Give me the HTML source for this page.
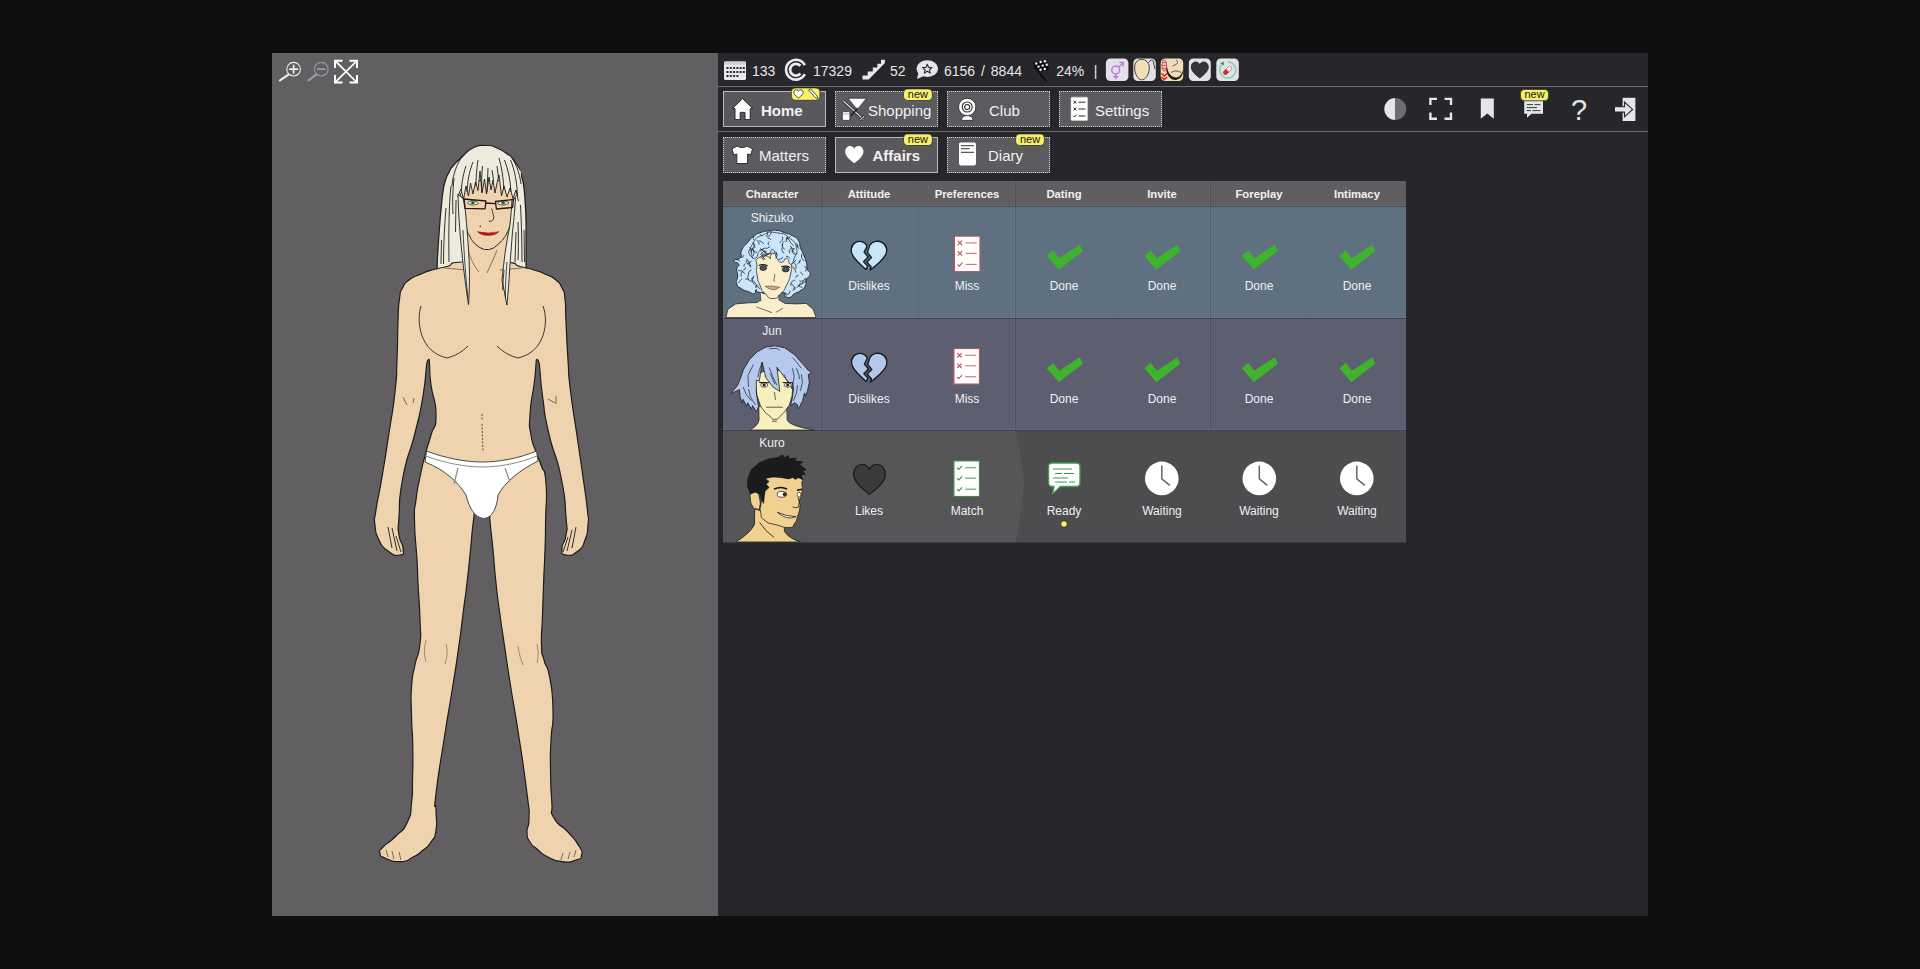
<!DOCTYPE html>
<html lang="en">
<head>
<meta charset="utf-8">
<title>Affairs</title>
<style>
*{box-sizing:border-box;margin:0;padding:0}
html,body{width:1920px;height:969px;overflow:hidden;background:#0f0f10}
body{position:relative;font-family:"Liberation Sans",sans-serif;color:#e9e9ec}
.abs{position:absolute}
#left{left:272px;top:53px;width:446px;height:863px;background:#625f63}
#right{left:718px;top:53px;width:930px;height:863px;background:#27262a}
.hl{left:718px;width:930px;height:1px;background:#6b6b70}
.stat{top:61.700px;height:18px;line-height:18px;font-size:14px;color:#e6e6ea;white-space:nowrap}
.btn{height:36px;width:103px;background:#5c5b5f;border:1px dotted #d4d4d8;color:#f1f1f3}
.btn.sel{border:1px solid #b9b9bd;background:#59585c}
.btn .lb{position:absolute;top:1.5px;height:34px;line-height:34px;font-size:15px;white-space:nowrap}
.btn.sel .lb{font-weight:bold}
.badge{position:absolute;background:#f6f06a;color:#1a1a10;border-radius:4px;font-size:10.5px;line-height:11px;height:12px;padding:0 4px;text-align:center}
#tbl{left:723px;top:181px;width:683px;height:362px;background:#505053}
.th{position:absolute;top:0.500px;height:25px;line-height:25px;font-size:11.300px;font-weight:bold;color:#f3f1ec;text-align:center;width:98px}
.row{position:absolute;left:0;width:683px}
.nm{position:absolute;left:0;width:98px;text-align:center;font-size:12px;color:#eeeef0;line-height:14px}
.cl{position:absolute;width:98px;text-align:center;font-size:12px;color:#f0f0f2;line-height:14px}
.vs{position:absolute;top:0;width:1px}
.bt{width:28.8px;height:12px;line-height:11px;font-size:11px;color:#16160e;text-align:center;z-index:5}
</style>
</head>
<body>
<div id="left" class="abs"></div>
<div id="right" class="abs"></div>
<!--FIG--><svg class="abs" style="left:272px;top:53px" width="446" height="863" viewBox="272 53 446 863">
<path d="M485.0,145.5C476.3,145.5 480.0,144.3 472.0,148.5C464.0,152.7 467.3,152.2 461.0,158.0C454.7,163.8 457.1,161.0 453.0,166.0C448.9,171.0 451.3,167.7 448.6,173.0C445.9,178.3 446.9,175.7 445.0,182.0C443.1,188.3 444.2,184.3 443.0,192.0C441.8,199.7 442.5,195.3 441.5,205.0C440.5,214.7 440.8,211.0 440.0,221.0C439.2,231.0 439.7,225.5 439.0,235.0C438.3,244.5 438.5,241.8 438.0,249.5C437.5,257.2 437.8,252.3 437.5,258.0C437.2,263.7 437.3,261.4 437.2,266.7C437.1,272.0 432.9,270.9 437.2,274.0C441.5,277.1 439.1,275.3 450.0,276.0C460.9,276.7 453.3,276.0 470.0,276.0C486.7,276.0 483.3,276.0 500.0,276.0C516.7,276.0 511.3,276.7 520.0,276.0C528.7,275.3 524.0,277.7 526.0,274.0C528.0,270.3 526.0,273.0 526.0,264.8C526.0,256.6 526.0,259.4 526.0,249.5C526.0,239.6 526.0,244.5 526.0,235.0C526.0,225.5 526.2,231.0 526.0,221.0C525.8,211.0 526.0,215.8 525.3,205.0C524.6,194.2 525.1,197.5 524.0,188.5C522.9,179.5 523.6,184.4 522.0,178.0C520.4,171.6 521.6,174.7 519.3,169.4C517.0,164.1 518.2,166.5 515.0,162.0C511.8,157.5 515.4,160.5 509.7,156.0C504.0,151.5 506.2,152.0 498.0,148.5C489.8,145.0 493.7,145.5 485.0,145.5Z" fill="#ecebdc" stroke="#1c1c1c" stroke-width="1.2"/>
<path d="M462.0,262.0C443.0,263.5 457.0,263.8 447.0,266.5C437.0,269.2 441.0,267.3 432.0,270.0C423.0,272.7 427.7,271.2 420.0,274.5C412.3,277.8 414.8,275.5 409.0,280.0C403.2,284.5 405.7,281.7 402.5,288.0C399.3,294.3 401.0,287.7 399.5,299.0C398.0,310.3 398.8,301.7 398.0,322.0C397.2,342.3 398.0,336.7 397.0,360.0C396.0,383.3 397.7,367.7 395.0,392.0C392.3,416.3 393.3,404.7 389.0,433.0C384.7,461.3 386.3,451.3 382.0,477.0C377.7,502.7 378.3,494.0 376.0,510.0C373.7,526.0 374.0,515.0 375.0,525.0C376.0,535.0 374.7,531.3 379.0,540.0C383.3,548.7 381.0,546.0 388.0,551.0C395.0,556.0 395.0,556.0 400.0,555.0C405.0,554.0 403.3,554.7 403.0,548.0C402.7,541.3 400.3,545.3 399.0,535.0C397.7,524.7 397.7,536.3 399.0,517.0C400.3,497.7 397.7,505.0 403.0,477.0C408.3,449.0 408.3,460.0 415.0,433.0C421.7,406.0 418.7,420.3 423.0,396.0C427.3,371.7 425.3,363.7 428.0,360.0C430.7,356.3 428.3,366.7 431.0,385.0C433.7,403.3 436.0,398.3 436.0,415.0C436.0,431.7 434.3,422.7 431.0,435.0C427.7,447.3 429.7,438.0 426.0,452.0C422.3,466.0 423.3,461.0 420.0,477.0C416.7,493.0 417.8,485.3 416.0,500.0C414.2,514.7 414.2,501.0 414.5,521.0C414.8,541.0 415.8,539.3 417.0,560.0C418.2,580.7 417.0,563.0 418.0,583.0C419.0,603.0 419.4,599.3 420.0,620.0C420.6,640.7 421.5,630.0 419.8,645.0C418.1,660.0 417.7,651.3 415.0,665.0C412.3,678.7 412.8,669.3 411.6,686.0C410.4,702.7 411.1,694.3 411.5,715.0C411.9,735.7 412.5,726.3 412.8,748.0C413.1,769.7 412.9,762.0 412.5,780.0C412.1,798.0 413.3,788.0 411.6,802.0C409.9,816.0 412.6,810.7 407.4,822.0C402.2,833.3 404.1,827.7 396.0,836.0C387.9,844.3 388.3,841.3 383.0,847.0C377.7,852.7 379.3,849.3 380.0,853.0C380.7,856.7 378.0,855.1 385.0,858.0C392.0,860.9 391.7,861.9 401.0,861.6C410.3,861.3 406.0,860.5 413.0,857.0C420.0,853.5 416.0,856.0 422.0,851.0C428.0,846.0 426.3,849.0 431.0,842.0C435.7,835.0 434.3,840.7 436.0,830.0C437.7,819.3 436.0,822.2 436.0,810.0C436.0,797.8 433.1,818.2 436.0,793.5C438.9,768.8 439.0,771.8 444.6,736.0C450.2,700.2 448.0,716.3 452.8,686.0C457.6,655.7 455.4,670.3 459.0,645.0C462.6,619.7 460.8,630.7 463.5,610.0C466.2,589.3 464.7,603.0 467.0,583.0C469.3,563.0 468.4,570.7 470.5,550.0C472.6,529.3 471.6,533.7 473.4,521.0C475.2,508.3 472.8,516.3 476.0,512.0C479.2,507.7 478.3,508.0 483.0,508.0C487.7,508.0 487.7,507.7 490.0,512.0C492.3,516.3 489.0,508.3 490.0,521.0C491.0,533.7 491.0,529.3 493.0,550.0C495.0,570.7 493.7,561.3 496.0,583.0C498.3,604.7 497.2,594.3 500.0,615.0C502.8,635.7 500.9,621.3 504.4,645.0C507.9,668.7 505.8,655.7 510.6,686.0C515.4,716.3 513.3,700.2 518.8,736.0C524.3,771.8 523.6,766.2 527.0,793.5C530.4,820.8 529.0,805.2 529.0,818.0C529.0,830.8 526.7,824.0 527.0,832.0C527.3,840.0 526.7,836.3 530.0,842.0C533.3,847.7 531.0,844.0 537.0,849.0C543.0,854.0 539.7,852.8 548.0,857.0C556.3,861.2 552.7,860.6 562.0,861.6C571.3,862.6 569.5,862.2 576.0,860.0C582.5,857.8 580.5,859.7 581.5,855.0C582.5,850.3 583.5,853.7 579.0,846.0C574.5,838.3 576.3,841.3 568.0,832.0C559.7,822.7 559.4,828.0 554.0,818.0C548.6,808.0 553.0,818.3 551.8,802.0C550.6,785.7 550.8,789.7 550.5,769.0C550.2,748.3 550.2,759.3 551.0,740.0C551.8,720.7 553.4,731.7 553.0,711.0C552.6,690.3 552.8,695.0 549.8,678.0C546.8,661.0 546.8,671.0 544.0,660.0C541.2,649.0 542.0,660.0 541.5,645.0C541.0,630.0 541.8,635.7 542.5,615.0C543.2,594.3 542.8,604.7 543.6,583.0C544.4,561.3 544.3,570.7 545.0,550.0C545.7,529.3 545.3,543.3 545.6,521.0C545.9,498.7 547.5,501.7 546.0,483.0C544.5,464.3 544.3,475.3 541.0,465.0C537.7,454.7 539.3,462.0 536.0,452.0C532.7,442.0 533.0,447.3 531.0,435.0C529.0,422.7 529.0,431.7 530.0,415.0C531.0,398.3 531.3,403.3 534.0,385.0C536.7,366.7 535.2,356.3 538.0,360.0C540.8,363.7 538.9,371.7 542.5,396.0C546.1,420.3 542.5,406.0 548.7,433.0C554.9,460.0 555.2,449.0 561.0,477.0C566.8,505.0 564.3,497.7 566.0,517.0C567.7,536.3 567.3,524.7 566.0,535.0C564.7,545.3 562.0,541.3 562.0,548.0C562.0,554.7 560.7,554.0 566.0,555.0C571.3,556.0 571.7,556.0 578.0,551.0C584.3,546.0 581.7,548.7 585.0,540.0C588.3,531.3 587.2,535.0 588.0,525.0C588.8,515.0 589.1,526.0 587.4,510.0C585.7,494.0 586.6,502.7 583.0,477.0C579.4,451.3 580.8,462.0 576.6,433.0C572.4,404.0 573.3,414.3 570.4,390.0C567.5,365.7 569.5,382.7 568.0,360.0C566.5,337.3 567.0,342.3 566.0,322.0C565.0,301.7 566.3,310.3 565.0,299.0C563.7,287.7 565.0,294.3 562.0,288.0C559.0,281.7 561.3,284.5 556.0,280.0C550.7,275.5 553.3,277.8 546.0,274.5C538.7,271.2 542.7,272.7 534.0,270.0C525.3,267.3 530.0,269.2 520.0,266.5C510.0,263.8 523.3,263.5 504.0,262.0C484.7,260.5 481.0,260.5 462.0,262.0Z" fill="#efd3ae" stroke="#1c1c1c" stroke-width="1.2" stroke-linejoin="round"/>
<path d="M462,264 L466,222 L511,222 L506,264Z" fill="#efd3ae"/>
<path d="M464.0,190.0C455.3,197.3 463.9,194.8 464.0,201.8C464.1,208.8 464.0,204.6 464.3,211.0C464.6,217.4 464.2,215.0 464.9,221.0C465.6,227.0 464.9,224.0 466.5,229.0C468.1,234.0 467.4,231.8 469.6,236.0C471.8,240.2 470.4,238.3 473.0,241.5C475.6,244.7 474.3,243.4 477.3,245.7C480.3,248.0 478.8,247.2 482.0,248.5C485.2,249.8 483.5,249.5 486.8,249.5C490.1,249.5 488.8,249.8 492.0,248.5C495.2,247.2 493.6,247.9 496.4,245.7C499.2,243.5 498.0,244.6 500.5,242.0C503.0,239.4 501.8,241.0 504.0,238.0C506.2,235.0 505.1,236.8 507.0,233.0C508.9,229.2 508.0,231.3 509.7,226.6C511.4,221.9 510.7,224.1 512.0,219.0C513.3,213.9 512.7,217.7 513.5,211.4C514.3,205.1 514.2,207.1 514.5,200.0C514.8,192.9 522.7,196.7 514.5,190.0C506.3,183.3 506.8,180.0 490.0,180.0C473.2,180.0 472.7,182.7 464.0,190.0Z" fill="#efd3ae" stroke="#1c1c1c" stroke-width="1"/>
<!-- briefs -->
<path d="M426.5,451 C445,458 465,462 482,462 C500,462 520,458 536.5,451 L538,461 C520,470 505,482 498,495 C497,508 492,518 484,518.5 C475,518 469,508 466,495 C458,482 445,470 425,462Z" fill="#ffffff" stroke="#4a4a4a" stroke-width="1"/>
<path d="M425.5,456 C445,463 465,467 482,467 C500,467 520,463 537,456" fill="none" stroke="#8a8a8a" stroke-width="1"/>
<path d="M458,468 L454,484 M505,468 L510,482" stroke="#8a8a8a" stroke-width="1.2" fill="none"/>
<!-- navel line -->
<path d="M482,414 L482,420 M482,424 L483,452" stroke="#5b4a3a" stroke-width="1" stroke-dasharray="2 1.5" fill="none"/>
<!-- collar / neck lines -->
<path d="M444,268 L468,270 M500,270 L522,268 M468,250 C470,258 474,266 479,272 M497,250 C494,258 490,266 487,273" stroke="#6b5a48" stroke-width="0.8" fill="none"/>
<!-- chest contour -->
<path d="M421,306 C416,322 420,352 447,358 M468,346 C462,352 455,356 447,358 M543,306 C549,322 545,352 518,358 M497,346 C503,352 510,356 518,358" stroke="#2a2420" stroke-width="0.9" fill="none"/>
<!-- knees -->
<path d="M426,640 C424,648 424,655 426,662 M446,644 C448,652 447,658 445,664 M518,646 C519,654 521,660 523,665 M537,644 C539,652 538,658 537,663" stroke="#8a7660" stroke-width="0.8" fill="none"/>
<!-- elbows -->
<path d="M403,397 L407,405 M414,398 L413,403 M548,399 L555,403 M556,396 L556,404" stroke="#5b4a3a" stroke-width="0.8" fill="none"/>
<!-- fingers -->
<path d="M388,527 L392,548 M392,528 L397,551 M396,536 L401,552 M572,548 L576,527 M567,551 L572,530 M563,552 L568,537" stroke="#1c1c1c" stroke-width="0.9" fill="none"/>
<!-- toes -->
<path d="M386,850 L388,857 M392,851 L394,859 M399,852 L401,860 M576,850 L574,857 M570,852 L568,859 M563,853 L561,860" stroke="#5b4a3a" stroke-width="0.8" fill="none"/>
<!-- hair front: fringe -->
<path d="M458,172 L457.500,197 L461,189 L463.500,199.500 L466,186 L468.500,196 L470.500,183 L473,194 L475.500,182 L478,190.500 L480,171 L482,193 L484.500,179 L486.500,194 L489,177 L491,190 L493,180 L495,193 L497,183 L499,175 L501.500,196 L504,186 L507,197 L510,188 L513,198.500 L516,190 L518.500,201 L521,172 L510,156 L485,149 L466,158Z" fill="#ecebdc"/>
<path d="M457.500,197 L461,189 L463.500,199.500 L466,186 L468.500,196 L470.500,183 L473,194 L475.500,182 L478,190.500 L480,171 L482,193 L484.500,179 L486.500,194 L489,177 L491,190 L493,180 L495,193 L497,183 L499,175 L501.500,196 L504,186 L507,197 L510,188 L513,198.500 L516,190 L518.500,201" fill="none" stroke="#1c1c1c" stroke-width="0.9" stroke-linejoin="round"/>
<path d="M478,160 C476.500,170 476,178 476,186 M482.500,166 C481.500,176 481.500,184 482,192 M473,162 C469,172 467.500,182 467,192 M466,166 C462.500,176 461.500,186 461.500,190 M488,168 L487,192 M492,170 L493.500,180 M499,158 C502,168 503.500,180 504,190 M504.500,160 C508.500,170 510.500,182 511,192 M510.500,160 C515,170 517,184 517.500,196 M497,166 L498.500,178" stroke="#1c1c1c" stroke-width="0.9" fill="none"/>
<!-- strands -->
<path d="M458,194 C458.500,222 462,262 468.500,304.500 C469.500,290 470,272 468.500,250 C467.500,232 465.500,214 464.500,200Z" fill="#ecebdc" stroke="#1c1c1c" stroke-width="0.9" stroke-linejoin="round"/>
<path d="M515.500,198 C514.500,214 513.500,224 512.600,230.500 C511.500,245 510.500,258 509.700,268.600 C509,282 508,294 506.900,305 C505.500,297 503.500,288 502,280 C503,270 504,262 505,253.400 C506.500,243 508,235 509.700,226.600 C511,216 511.500,208 512,200Z" fill="#ecebdc" stroke="#1c1c1c" stroke-width="0.9" stroke-linejoin="round"/>
<path d="M463,230 C464,255 466,280 468,298 M507,262 C506,275 505,288 505.500,298 M504,270 L502.500,290" stroke="#1c1c1c" stroke-width="0.8" fill="none"/>
<path d="M451,186 C449,205 448.500,230 449,262 M446,208 C444.500,225 443.500,245 443.500,264 M454,178 C452.500,192 452.500,205 453,214 M441.500,240 L441,264 M456,200 L455.500,232 M520.500,205 C521.500,225 522,245 522,262 M518,222 C518.500,238 518.500,250 518,260 M524,230 L524.500,262 M516,232 L515,262 M461,158 C455,168 452.500,178 452,186 M509,154 C515.500,162 519.500,172 521,184" stroke="#1c1c1c" stroke-width="0.9" fill="none"/>
<!-- glasses & eyes -->
<path d="M467.500,203 C470,200 475.500,200 478.500,203.500 C475.500,205.500 470,205.500 467.500,203Z" fill="#f7f7f2" stroke="#1a1a1a" stroke-width="0.700"/>
<circle cx="472.800" cy="202.700" r="2.300" fill="#5c9a6e"/><circle cx="472.800" cy="202.700" r="0.900" fill="#17301f"/>
<path d="M497.500,203.500 C500,200 506,200 509,203 C506,205.500 500,205.500 497.500,203.500Z" fill="#f7f7f2" stroke="#1a1a1a" stroke-width="0.700"/>
<circle cx="503.200" cy="202.700" r="2.300" fill="#5c9a6e"/><circle cx="503.200" cy="202.700" r="0.900" fill="#17301f"/>
<path d="M463.500,199 L486,201 L485,208.800 L465,208.300Z M495.400,201.500 L513.500,199.400 L512.600,207.500 L496.400,209Z M486,203 L495.400,203.600" fill="none" stroke="#2d1513" stroke-width="1.300" stroke-linejoin="round"/>
<path d="M491.600,208.500 C493,213 494,216 493.500,219 C492.500,221.500 490.500,221.500 488.700,221" stroke="#3b2a20" stroke-width="0.900" fill="none"/>
<circle cx="480.300" cy="226.300" r="0.700" fill="#3b2a20"/>
<g fill="#e9a392" opacity="0.700"><circle cx="470" cy="213" r="0.600"/><circle cx="473" cy="214.500" r="0.600"/><circle cx="476" cy="213" r="0.600"/><circle cx="479" cy="214.500" r="0.600"/><circle cx="500" cy="214" r="0.600"/><circle cx="503" cy="215.500" r="0.600"/><circle cx="506" cy="214" r="0.600"/></g>
<!-- mouth -->
<path d="M477.300,231.600 C481,232.600 484,232.200 488,233 C492,232.200 495.500,232.600 499.200,231.400 C495,236.600 482,237 477.300,231.600Z" fill="#cf120c" stroke="#5a0a08" stroke-width="0.400"/>
</svg><!--/FIG-->

<!-- status bar -->
<div class="abs stat" style="left:752px">133</div>
<div class="abs stat" style="left:813px">17329</div>
<div class="abs stat" style="left:890px">52</div>
<div class="abs stat" style="left:944px;word-spacing:2px">6156 / 8844</div>
<div class="abs stat" style="left:1056.200px">24%</div>
<div class="abs stat" style="left:1093.700px">|</div>
<div class="abs hl" style="top:86px"></div>
<div class="abs hl" style="top:131px"></div>

<!-- nav row 1 -->
<div class="abs btn sel" style="left:723px;top:91px"><span class="lb" style="left:37px">Home</span></div>
<div class="abs btn" style="left:835px;top:91px"><span class="lb" style="left:32px">Shopping</span></div>
<div class="abs btn" style="left:947px;top:91px"><span class="lb" style="left:41px">Club</span></div>
<div class="abs btn" style="left:1059px;top:91px"><span class="lb" style="left:35px">Settings</span></div>
<!-- nav row 2 -->
<div class="abs btn" style="left:723px;top:137px"><span class="lb" style="left:35px;top:0.600px">Matters</span></div>
<div class="abs btn sel" style="left:835px;top:137px"><span class="lb" style="left:36.500px;top:0.600px">Affairs</span></div>
<div class="abs btn" style="left:947px;top:137px"><span class="lb" style="left:40px;top:0.600px">Diary</span></div>

<!-- table -->
<div id="tbl" class="abs">
  <div class="abs" style="left:0;top:0;width:683px;height:25px;background:#615e62"></div>
  <div class="th" style="left:0">Character</div>
  <div class="th" style="left:97px">Attitude</div>
  <div class="th" style="left:195px">Preferences</div>
  <div class="th" style="left:292px">Dating</div>
  <div class="th" style="left:390px">Invite</div>
  <div class="th" style="left:487px">Foreplay</div>
  <div class="th" style="left:585px">Intimacy</div>

  <div class="row" style="top:25px;height:112px;background:#5f7080">
    <div class="nm" style="top:5px">Shizuko</div>
    <div class="cl" style="left:97px;top:73px">Dislikes</div>
    <div class="cl" style="left:195px;top:73px">Miss</div>
    <div class="cl" style="left:292px;top:73px">Done</div>
    <div class="cl" style="left:390px;top:73px">Done</div>
    <div class="cl" style="left:487px;top:73px">Done</div>
    <div class="cl" style="left:585px;top:73px">Done</div>
  </div>
  <div class="row" style="top:137px;height:113px;background:#5d5e6f">
    <div class="nm" style="top:6px">Jun</div>
    <div class="cl" style="left:97px;top:74px">Dislikes</div>
    <div class="cl" style="left:195px;top:74px">Miss</div>
    <div class="cl" style="left:292px;top:74px">Done</div>
    <div class="cl" style="left:390px;top:74px">Done</div>
    <div class="cl" style="left:487px;top:74px">Done</div>
    <div class="cl" style="left:585px;top:74px">Done</div>
  </div>
  <div class="row" style="top:250px;height:112px;background:#4d4c4f">
    <svg class="abs" style="left:0;top:0" width="310" height="112" viewBox="0 0 310 112"><path d="M0,0 H293 C296,18 300.500,34 300.800,50 C301,68 296,92 293,112 H0Z" fill="#565558"/></svg>
    <div class="nm" style="top:5px">Kuro</div>
    <div class="cl" style="left:97px;top:73px">Likes</div>
    <div class="cl" style="left:195px;top:73px">Match</div>
    <div class="cl" style="left:292px;top:73px">Ready</div>
    <div class="cl" style="left:390px;top:73px">Waiting</div>
    <div class="cl" style="left:487px;top:73px">Waiting</div>
    <div class="cl" style="left:585px;top:73px">Waiting</div>
  </div>
  <!--LINES-->
  <div class="abs" style="left:0;top:24px;width:683px;height:1px;background:rgba(255,255,255,.05)"></div>
  <div class="abs" style="left:0;top:25px;width:683px;height:1px;background:rgba(20,25,35,.35)"></div>
  <div class="abs" style="left:0;top:136px;width:683px;height:1px;background:rgba(255,255,255,.07)"></div>
  <div class="abs" style="left:0;top:137px;width:683px;height:1px;background:rgba(20,22,40,.40)"></div>
  <div class="abs" style="left:0;top:248px;width:683px;height:1px;background:rgba(255,255,255,.06)"></div>
  <div class="abs" style="left:0;top:249px;width:683px;height:1px;background:rgba(20,20,30,.40)"></div>
  <div class="abs" style="left:0;top:361px;width:683px;height:1px;background:rgba(0,0,0,.25)"></div>
  <div class="vs" style="left:98px;height:250px;background:rgba(20,25,40,.16)"></div>
  <div class="vs" style="left:292px;height:250px;background:rgba(20,25,40,.20)"></div>
  <div class="vs" style="left:487px;height:250px;background:rgba(20,25,40,.20)"></div>
  <div class="vs" style="left:195px;height:250px;background:rgba(20,25,40,.05)"></div>
  <div class="vs" style="left:390px;height:250px;background:rgba(20,25,40,.02)"></div>
  <div class="vs" style="left:585px;height:250px;background:rgba(20,25,40,.02)"></div>
  <div class="vs" style="left:97px;height:250px;background:rgba(255,255,255,.03)"></div>
  <div class="vs" style="left:291px;height:250px;background:rgba(255,255,255,.04)"></div>
  <div class="vs" style="left:486px;height:250px;background:rgba(255,255,255,.04)"></div>
  <!--/LINES-->
</div>
<!--IC1--><svg class="abs" style="left:0;top:0;pointer-events:none" width="1920" height="969" viewBox="0 0 1920 969">
<!-- left panel zoom controls -->
<g fill="none" stroke="#ececee" stroke-linecap="round">
  <circle cx="293.600" cy="69.200" r="6.800" stroke-width="1.100"/>
  <path d="M288.400,74.600 L280,80.400" stroke-width="2.200"/>
  <path d="M289.800,69.200 H297.400 M293.600,65.400 V73" stroke-width="1.700"/>
</g>
<g fill="none" stroke="#9a999e" stroke-linecap="round">
  <circle cx="321.300" cy="69.200" r="6.800" stroke-width="1.100"/>
  <path d="M316.100,74.600 L308.600,80.400" stroke-width="2.200"/>
  <path d="M317.600,69.200 H325" stroke-width="1.700"/>
</g>
<g fill="none" stroke="#ffffff" stroke-width="1.700" stroke-linecap="square">
  <path d="M335.500,61.200 L356.500,82 M356.500,61.200 L335.500,82"/>
  <path d="M335,67 V60.700 H341.500 M350.500,60.700 H357 V67 M357,76 V82.500 H350.500 M341.500,82.500 H335 V76" stroke-width="2"/>
</g>

<!-- status bar icons -->
<!-- calendar -->
<g>
  <rect x="724" y="61.500" width="22" height="18.500" rx="1.500" fill="#e9e9ec"/>
  <rect x="724" y="61.500" width="22" height="3.200" rx="1" fill="#d0d0d4"/>
  <g fill="#26262b">
    <rect x="726.500" y="67" width="2" height="2"/><rect x="729.800" y="67" width="2" height="2"/><rect x="733.100" y="67" width="2" height="2"/><rect x="736.400" y="67" width="2" height="2"/><rect x="739.700" y="67" width="2" height="2"/><rect x="742.800" y="67" width="2" height="2"/>
    <rect x="726.500" y="71" width="2" height="2"/><rect x="729.800" y="71" width="2" height="2"/><rect x="733.100" y="71" width="2" height="2"/><rect x="736.400" y="71" width="2" height="2"/><rect x="739.700" y="71" width="2" height="2"/><rect x="742.800" y="71" width="2" height="2"/>
    <rect x="726.500" y="75" width="2" height="2"/><rect x="729.800" y="75" width="2" height="2"/><rect x="733.100" y="75" width="2" height="2"/><rect x="736.400" y="75" width="2" height="2"/>
  </g>
</g>
<!-- coin C -->
<g fill="none" stroke="#ececee" stroke-linecap="butt">
  <path d="M804.800,65.200 A9.900,9.900 0 1 0 804.800,74.200" stroke-width="2.600"/>
  <path d="M800.400,65.750 A5.900,5.900 0 1 0 800.400,73.650" stroke-width="2.700"/>
</g>
<!-- stairs -->
<path d="M862.500,79.500 V75.500 H867.700 V71.500 H872.800 V67.500 H877.400 V63.700 H881 V59.700 H884.900 V63 L868.700,79.500Z" fill="#e9e9ec"/>
<!-- speech bubble with star -->
<g>
  <ellipse cx="927.300" cy="68.600" rx="10.800" ry="8.300" fill="#e6e6ea"/>
  <path d="M918.500,72.500 L917,79 L924.500,75.800Z" fill="#e6e6ea"/>
  <path d="M927.300,64.200 L928.600,67.400 L932,67.600 L929.400,69.800 L930.300,73.100 L927.300,71.300 L924.300,73.100 L925.200,69.800 L922.600,67.600 L926,67.400Z" fill="none" stroke="#26262b" stroke-width="1.100" stroke-linejoin="round"/>
</g>
<!-- checkered flag -->
<g>
  <path d="M1034,66 L1046,81" stroke="#0c0c0d" stroke-width="1.600"/>
  <path d="M1033,63.500 C1037,59.500 1041,63.500 1044.500,59 L1049.500,68.500 C1046,73 1042,69 1038,73Z" fill="#0d0d0e"/>
  <g fill="#f2f2f4">
    <circle cx="1036.200" cy="63.500" r="1.200"/><circle cx="1040.600" cy="62" r="1.200"/><circle cx="1044.800" cy="61.300" r="1.200"/>
    <circle cx="1038.500" cy="66.600" r="1.200"/><circle cx="1042.700" cy="65.600" r="1.200"/><circle cx="1046.700" cy="64.800" r="1.200"/>
    <circle cx="1040.500" cy="69.800" r="1.200"/><circle cx="1044.800" cy="69" r="1.200"/>
  </g>
</g>
<!-- square status icons -->
<g>
  <rect x="1105.900" y="58.500" width="22.500" height="22.500" rx="4.500" fill="#e3e1e8"/>
  <g fill="none" stroke="#bf7be0" stroke-width="1.500">
    <circle cx="1115.700" cy="70" r="3.900"/>
    <path d="M1118.500,67.200 L1123,62.700 M1119.300,62.600 H1123.200 V66.500 M1115.700,73.900 V79.300 M1113.200,76.800 H1118.200"/>
  </g>
  <rect x="1133.300" y="58.500" width="22.500" height="22.500" rx="4.500" fill="#e3e1e8"/>
  <path d="M1141,59.400 C1146,59 1149.800,63 1149.300,69 C1148.800,75 1145,80.300 1141.500,79.800 C1138,79.300 1134.600,74 1134.600,68 C1134.600,63 1137,59.800 1141,59.400Z" fill="#f3deb5" stroke="#3a3528" stroke-width="0.900"/>
  <path d="M1148.500,62.500 C1150.500,60 1152,59.600 1153,60.500 L1155,69" fill="none" stroke="#3a3528" stroke-width="0.900"/>
  <rect x="1160.700" y="58.500" width="22.500" height="22.500" rx="4.500" fill="#f0dcb8"/>
  <path d="M1167,66.500 C1168,74 1172,77.500 1176,77.500 C1180,77.500 1183,73 1183.200,67.500 L1183.200,72 C1182,78 1178,80 1175,80 C1171,80 1166.500,76 1166,68Z" fill="#1f1a16"/>
  <path d="M1171,72.500 C1174,70.500 1178,70.500 1181,72.500 M1176,60 C1178,61 1178,63.500 1176,64.500 C1174.500,65.500 1173,65 1172.500,66.500" fill="none" stroke="#3a3528" stroke-width="0.800"/>
  <ellipse cx="1164.300" cy="65.500" rx="2.300" ry="5.600" fill="#f4c6c8" stroke="#c0353d" stroke-width="0.900"/>
  <path d="M1162.300,62.500 H1166.300 M1162.300,65.500 H1166.300 M1162.300,68.500 H1166.300" stroke="#c0353d" stroke-width="0.700"/>
  <path d="M1161.500,73.500 L1164.300,76 L1167.100,73.500 M1161.500,77 L1164.300,79.500 L1167.100,77" fill="none" stroke="#e01b1b" stroke-width="1.500"/>
  <rect x="1188.800" y="58.500" width="22" height="22.500" rx="4.500" fill="#e3e1e8"/>
  <path d="M1199.800,78 C1194,73.500 1191.300,70.500 1191.300,67 C1191.300,63.800 1193.600,62 1195.800,62 C1197.600,62 1199,63 1199.800,64.600 C1200.600,63 1202,62 1203.800,62 C1206,62 1208.300,63.800 1208.300,67 C1208.300,70.500 1205.600,73.500 1199.800,78Z" fill="#353537" stroke="#1a1a1b" stroke-width="0.800"/>
  <rect x="1216.300" y="58.500" width="22.500" height="22.500" rx="4.500" fill="#e3e1e8"/>
  <path d="M1222.500,64 A8,8 0 1 0 1228,62" fill="none" stroke="#7fcfa0" stroke-width="1.300"/>
  <path d="M1220,63.200 L1223.800,61.200 L1224.200,65.600Z" fill="#2fa860"/>
  <g transform="rotate(-45 1227.500 70.500)">
    <rect x="1222.500" y="68.400" width="10" height="4.200" rx="2.100" fill="#ffffff" stroke="#b8383c" stroke-width="0.600"/>
    <path d="M1222.500,70.500 A2.100,2.100 0 0 1 1224.600,68.400 H1227.500 V72.600 H1224.600 A2.100,2.100 0 0 1 1222.500,70.500Z" fill="#c2323a"/>
  </g>
</g>
</svg>
<!--/IC1-->
<!--IC2--><svg class="abs" style="left:0;top:0;pointer-events:none" width="1920" height="969" viewBox="0 0 1920 969">
<!-- Home icon -->
<path d="M742.600,98.600 L752.800,108.600 H750.200 V119.600 H745 V112.400 H740.200 V119.600 H735 V108.600 H732.400Z" fill="#ffffff" stroke="#1d1d1f" stroke-width="0.900" stroke-linejoin="round"/>
<!-- Shopping icon -->
<g>
  <path d="M848,98.200 H866.500 L858.500,108.200 H856Z" fill="#ffffff" stroke="#1d1d1f" stroke-width="0.700"/>
  <path d="M843.500,101 L863.500,119.500" stroke="#1d1d1f" stroke-width="2.600"/>
  <path d="M843.500,101 L863.500,119.500" stroke="#d9d9dc" stroke-width="1.300"/>
  <path d="M860,120.200 L864.800,115.600" stroke="#1d1d1f" stroke-width="2.400"/>
  <path d="M860.300,119.900 L864.500,115.900" stroke="#d9d9dc" stroke-width="1.100"/>
  <path d="M857,109 L851,116" stroke="#1d1d1f" stroke-width="1.300"/>
  <rect x="842.300" y="111.600" width="7.600" height="8.800" rx="1.300" fill="#ffffff" stroke="#1d1d1f" stroke-width="0.700"/>
  <path d="M842.600,114 H849.600" stroke="#8b8b90" stroke-width="0.700"/>
</g>
<!-- Club icon (webcam) -->
<g>
  <path d="M961.500,120.400 C961.500,117 964,115.600 967.200,115.600 C970.400,115.600 973,117 973,120.400Z" fill="#ffffff" stroke="#1d1d1f" stroke-width="0.800"/>
  <circle cx="967.200" cy="107" r="8.700" fill="#ffffff" stroke="#1d1d1f" stroke-width="0.800"/>
  <circle cx="967.200" cy="107" r="5" fill="none" stroke="#2a2a2c" stroke-width="1.100"/>
  <circle cx="967.200" cy="107" r="2.500" fill="none" stroke="#2a2a2c" stroke-width="1.100"/>
</g>
<!-- Settings icon -->
<g>
  <rect x="1071" y="97.200" width="16.600" height="23.300" rx="1" fill="#ffffff" stroke="#d0d0d4" stroke-width="0.600"/>
  <g stroke="#2a2a2c" stroke-width="1" fill="none">
    <path d="M1073.500,100.800 L1076.300,103.600 M1076.300,100.800 L1073.500,103.600 M1078.500,102.200 H1085.500"/>
    <path d="M1073.500,107.600 L1076.300,110.400 M1076.300,107.600 L1073.500,110.400 M1078.500,109 H1085.500"/>
    <path d="M1073.300,115.800 L1074.500,117 L1076.600,114.600 M1078.500,116 H1085.500"/>
  </g>
</g>
<!-- Matters icon (t-shirt) -->
<path d="M737.500,146 C739.500,148 744.500,148 746.800,146 L752.600,148.800 L750.600,155 L747.600,154 V163.600 H736.800 V154 L733.800,155 L731.800,148.800Z" fill="#ffffff" stroke="#1d1d1f" stroke-width="0.900" stroke-linejoin="round"/>
<!-- Affairs icon (heart) -->
<path d="M854.300,163.200 C848,158.400 845.200,155.300 845.200,151.500 C845.200,148 847.700,146 850.100,146 C851.900,146 853.500,147 854.300,148.800 C855.100,147 856.700,146 858.500,146 C860.900,146 863.400,148 863.400,151.500 C863.400,155.300 860.600,158.400 854.300,163.200Z" fill="#ffffff"/>
<!-- Diary icon -->
<g>
  <rect x="959" y="142.400" width="17" height="23" rx="1.800" fill="#ffffff"/>
  <path d="M961,145.600 H974 M961,148.600 H969.600 M961,152.400 H974" stroke="#5a595d" stroke-width="1.100"/>
</g>

<!-- right side icons -->
<g>
  <path d="M1395.300,98 A11,11 0 0 0 1395.300,120Z" fill="#e6e6ea"/>
  <path d="M1395.300,98 A11,11 0 0 1 1395.300,120Z" fill="#6d6c71"/>
  <!-- fullscreen -->
  <path d="M1430.400,105 V98.900 H1437 M1444.500,98.900 H1451 V105 M1451,112.500 V118.800 H1444.500 M1437,118.800 H1430.400 V112.500" fill="none" stroke="#e6e6ea" stroke-width="2.400"/>
  <!-- bookmark -->
  <path d="M1480.800,98.600 H1493.800 V118.800 L1487.300,113.400 L1480.800,118.800Z" fill="#e6e6ea"/>
  <!-- chat -->
  <path d="M1524.200,100.500 H1543 V113.800 H1531.500 L1527,117.800 V113.800 H1524.200Z" fill="#e6e6ea"/>
  <path d="M1526.800,104.600 H1533 M1534.500,104.600 H1540.400 M1526.800,107.600 H1537 M1526.800,110.600 H1531 M1532.500,110.600 H1540.400" stroke="#3a3a3e" stroke-width="1"/>
  <!-- exit -->
  <rect x="1622.600" y="97.800" width="12.800" height="23.200" fill="#e6e6ea"/>
  <path d="M1614.400,106.700 H1624.500 V102 L1632.600,109.400 L1624.500,116.800 V112.100 H1614.400Z" fill="#e6e6ea" stroke="#26262b" stroke-width="1.100"/>
</g>
<!-- badges (shapes) -->
<g fill="#f6f06c" stroke="#24241a" stroke-width="0.700">
  <rect x="791.300" y="87.900" width="28.600" height="12.400" rx="4"/>
  <rect x="903.500" y="88.900" width="28.800" height="11.600" rx="4"/>
  <rect x="903.500" y="133.900" width="28.800" height="11.600" rx="4"/>
  <rect x="1015.600" y="133.900" width="28.800" height="11.600" rx="4"/>
  <rect x="1520.500" y="89.400" width="28" height="11.400" rx="4"/>
</g>
<!-- home badge content -->
<path d="M798.500,98 C795,95.300 793.900,93.900 793.900,92.200 C793.900,90.700 795,89.800 796.200,89.800 C797.200,89.800 798,90.400 798.500,91.300 C799,90.400 799.800,89.800 800.800,89.800 C802,89.800 803.100,90.700 803.100,92.200 C803.100,93.900 802,95.300 798.500,98Z" fill="#ffffff" stroke="#24241a" stroke-width="0.800"/>
<path d="M808.600,90.200 L810.400,88.900 L817.200,96 L817.600,98.400 L815.300,97.600Z" fill="#ffffff" stroke="#24241a" stroke-width="0.800" stroke-linejoin="round"/>
</svg>
<!--/IC2-->
<!--BT-->
<div class="abs bt" style="left:903.5px;top:88.5px">new</div>
<div class="abs bt" style="left:903.5px;top:133.500px">new</div>
<div class="abs bt" style="left:1015.6px;top:133.500px">new</div>
<div class="abs bt" style="left:1520.500px;top:89px;width:28px">new</div>
<div class="abs" style="left:1569px;top:93px;width:20px;height:34px;line-height:34px;text-align:center;font-size:29px;color:#e6e6ea">?</div>
<!--/BT-->
<!--PORT--><svg class="abs" style="left:0;top:0;pointer-events:none" width="1920" height="969" viewBox="0 0 1920 969">
<path d="M725.9,317.6 L727.9,309.3 L735.7,303.9 L747.5,302.9 L757.3,302.5 L761.2,299.5 L761.2,293.6 L777.9,293.6 L778.9,299.5 L784.7,303.4 L796.5,303.9 L806.3,303.4 L813.2,309.3 L816.1,317.6Z" fill="#fbefcb" stroke="#2a2a2a" stroke-width="0.8" stroke-linejoin="round"/>
<path d="M769.1,230.9C774.3,230.2 771.7,229.7 776.9,230.4C782.1,231.0 779.5,231.0 784.7,232.8C790.0,234.6 788.0,233.2 792.6,235.8C797.2,238.4 795.9,236.8 798.5,240.7C801.1,244.6 798.8,243.0 800.4,247.5C802.1,252.1 801.4,249.5 803.4,254.4C805.3,259.3 805.0,257.4 806.3,262.3C807.6,267.2 806.0,265.2 807.3,269.1C808.6,273.0 810.6,270.4 810.2,274.0C809.9,277.6 807.9,276.0 806.3,279.9C804.7,283.8 807.3,282.2 805.3,285.8C803.4,289.4 804.0,288.1 800.4,290.7C796.8,293.3 798.1,291.3 794.5,293.6C791.0,295.9 792.9,296.9 789.6,297.5C786.4,298.2 787.0,297.2 784.7,295.6C782.5,294.0 790.6,293.6 782.8,292.6C774.9,291.7 770.0,293.6 761.2,292.6C752.4,291.7 758.6,289.4 756.3,289.7C754.0,290.0 757.0,293.0 754.4,293.6C751.7,294.3 752.7,293.3 748.5,291.7C744.2,290.0 745.5,291.3 741.6,288.7C737.7,286.1 738.0,288.1 736.7,283.8C735.4,279.6 737.7,280.9 737.7,276.0C737.7,271.1 736.4,273.0 736.7,269.1C737.0,265.2 739.6,267.0 738.7,264.2C737.7,261.4 733.1,263.1 733.8,260.8C734.4,258.5 738.0,260.8 740.6,257.4C743.2,253.9 739.3,255.4 741.6,250.5C743.9,245.6 743.2,247.5 747.5,242.6C751.7,237.7 749.8,239.2 754.4,235.8C758.9,232.4 756.3,234.0 761.2,232.4C766.1,230.7 763.8,231.5 769.1,230.9Z" fill="#cbe6fa" stroke="#1a2026" stroke-width="0.9"/>
<path d="M760.2,292.6 L761.2,303.4 L779.8,303.4 L778.4,293.6 L773.0,298.5Z" fill="#fbefcb"/>
<path d="M759.3,257.4C753.2,261.6 757.5,260.0 756.8,266.2C756.2,272.4 756.2,269.4 757.3,276.0C758.4,282.5 757.6,279.9 760.2,285.8C762.8,291.7 760.9,289.4 765.1,293.6C769.4,297.9 767.8,298.5 773.0,298.5C778.2,298.5 776.2,298.2 780.8,293.6C785.4,289.1 783.4,291.3 786.7,284.8C790.0,278.3 789.0,280.9 790.6,274.0C792.3,267.2 791.6,269.8 791.6,264.2C791.6,258.7 796.2,260.9 790.6,257.4C785.1,253.8 785.4,253.4 774.9,253.4C764.5,253.4 765.3,253.1 759.3,257.4Z" fill="#fbefcb" stroke="#2a2a2a" stroke-width="0.8"/>
<path d="M760.2,292.6 L761.0,301.5 M778.4,295.1 L779.1,301.0 M756.3,306.9 L772.0,312.7 M782.8,308.3 L775.9,312.3" stroke="#3a3a3a" stroke-width="0.7" fill="none"/>
<path d="M755.3,258.3C758.6,257.4 757.0,250.8 761.2,249.5C765.5,248.2 764.2,254.4 768.1,254.4C772.0,254.4 770.0,248.2 773.0,249.5C775.9,250.8 774.0,254.1 776.9,258.3C779.8,262.6 778.5,262.3 781.8,262.3C785.1,262.3 783.8,257.7 786.7,258.3C789.6,259.0 788.0,264.5 790.6,264.2C793.2,263.9 792.6,262.6 794.5,257.4C796.5,252.1 797.8,254.7 796.5,248.5C795.2,242.3 797.2,244.0 790.6,238.7C784.1,233.5 786.1,234.2 776.9,232.8C767.8,231.5 771.0,231.5 763.2,234.8C755.3,238.1 757.3,236.8 753.4,242.6C749.5,248.5 750.8,247.2 751.4,252.5C752.1,257.7 752.1,259.3 755.3,258.3Z" fill="#cbe6fa" stroke="#1a2026" stroke-width="0.7"/>
<path d="M758.5,240.9 Q760.2,240.2 764.1,243.9 M736.6,259.8 Q738.9,259.2 739.9,261.7 M785.9,237.8 Q789.2,238.2 790.2,241.9 M793.2,261.9 Q796.7,264.3 795.9,268.9 M771.6,253.8 Q769.5,256.0 770.3,259.0 M745.4,263.5 Q743.2,264.7 744.0,266.8 M801.6,254.0 Q800.2,258.3 804.4,261.1 M786.0,256.2 Q788.5,256.3 789.9,258.4 M765.8,255.5 Q764.3,254.9 760.5,258.1 M759.8,234.4 Q760.5,234.4 762.4,236.5 M800.6,271.8 Q800.7,272.6 803.1,275.1 M760.0,248.5 Q761.5,249.3 765.4,253.1 M791.7,250.8 Q793.0,254.9 797.2,253.9 M792.8,266.4 Q796.2,270.8 795.8,272.6 M790.3,246.0 Q792.8,249.6 792.5,251.3 M753.6,277.1 Q750.5,281.4 754.7,284.6 M769.7,253.4 Q768.0,252.5 764.5,255.5 M790.6,236.5 Q788.3,239.0 786.7,238.0 M745.7,267.4 Q745.7,269.6 743.3,270.1 M796.9,245.0 Q796.9,247.6 799.3,248.9 M790.3,290.7 Q789.9,294.7 785.9,295.3 M800.5,282.6 Q800.0,286.4 796.7,287.4 M776.3,252.6 Q778.5,255.8 775.6,258.3 M752.8,249.3 Q755.4,252.8 752.8,256.2 M805.8,277.5 Q803.6,282.2 799.3,280.9 M746.1,259.7 Q745.7,262.9 748.5,264.9 M767.4,232.1 Q768.5,234.8 766.1,236.8 M793.3,248.9 Q791.9,251.2 794.2,252.8 M787.3,236.8 Q787.7,239.0 785.7,240.2 M768.5,253.5 Q766.9,256.3 763.4,256.4 M753.8,243.0 Q755.4,247.3 751.6,250.2 M796.4,259.7 Q793.0,263.3 792.3,263.5 M801.0,259.6 Q799.2,260.7 799.6,263.0 M761.6,252.8 Q761.5,255.2 765.1,259.8 M749.1,264.5 Q749.4,266.7 751.1,267.4 M751.6,269.9 Q748.0,270.8 748.3,274.7 M745.2,279.2 Q746.9,277.9 750.9,281.7 M803.3,281.1 Q802.4,284.3 799.2,285.4 M743.9,254.9 Q743.6,257.4 741.1,257.6 M771.2,231.1 Q771.4,235.6 767.3,236.8 M795.6,287.3 Q793.2,288.1 793.0,290.9 M782.2,244.1 Q781.2,245.8 784.8,249.6 M754.3,275.7 Q751.1,277.7 751.7,281.6 M775.8,251.7 Q777.1,253.7 776.1,255.5 M790.9,248.3 Q788.3,250.2 789.7,253.2 M756.9,240.3 Q760.0,243.2 759.1,244.7 M752.8,248.6 Q753.5,252.5 756.9,252.6 M746.8,258.5 Q746.6,259.5 749.6,262.3 M752.4,242.5 Q755.6,246.4 755.1,247.8 M749.8,248.9 Q747.3,252.2 750.0,255.6 M766.8,251.7 Q762.8,250.4 760.4,254.6 M804.7,266.1 Q807.6,268.6 805.6,271.5 M805.8,279.0 Q805.7,282.5 802.0,284.0 M787.2,238.4 Q785.6,240.3 787.0,242.1 M770.1,246.5 Q767.2,248.6 766.0,248.5 M765.9,248.0 Q764.1,247.3 760.4,251.2 M761.5,257.3 Q763.7,258.3 763.3,260.3 M757.6,285.5 Q757.6,288.0 760.5,288.9 M738.1,270.5 Q742.3,269.7 744.9,273.7 M747.8,260.9 Q751.0,265.2 750.9,266.7 M748.3,274.4 Q746.8,277.5 748.9,280.1 M767.6,238.1 Q769.9,237.8 770.9,240.0 M757.4,284.5 Q755.5,285.6 755.6,287.8 M782.1,247.4 Q780.8,250.0 783.7,253.4 M753.4,280.7 Q757.1,285.0 756.5,287.4 M742.0,278.6 Q738.3,282.3 738.6,282.9 M795.1,280.1 Q790.7,280.9 790.8,285.7 M791.3,247.4 Q792.5,249.1 794.8,248.8 M754.0,236.5 Q752.4,238.4 754.1,240.3 M798.5,275.2 Q796.2,275.5 795.6,277.8 M749.0,247.4 Q752.1,250.0 752.5,250.2 M753.0,247.3 Q750.5,251.0 751.0,252.7 M751.4,260.8 Q750.4,263.5 747.4,263.8 M800.0,260.8 Q800.3,261.4 797.1,264.4 M750.4,255.5 Q752.7,258.2 753.2,258.4 M765.0,255.7 Q767.0,255.0 770.5,258.6 M784.5,241.2 Q781.6,243.2 782.5,246.6 M783.0,256.9 Q781.6,259.8 778.4,259.4 M769.0,241.7 Q767.4,243.4 768.6,245.2 M790.1,242.3 Q793.0,245.0 793.9,245.5 M791.4,283.7 Q795.9,288.4 794.8,289.8 M782.4,236.6 Q783.8,240.8 779.6,242.6 M797.2,243.1 Q796.2,244.8 798.4,247.3 M742.8,270.9 Q740.1,274.2 741.1,276.5 M797.7,284.9 Q799.3,287.4 802.4,287.3" fill="none" stroke="#1a2026" stroke-width="0.75"/>
<ellipse cx="763.2" cy="268.1" rx="3.4" ry="2.3" fill="#46525c" stroke="#111" stroke-width="0.7"/>
<path d="M758.7,265.5 Q763.2,263.5 767.7,265.9" stroke="#111" stroke-width="1.1" fill="none"/>
<ellipse cx="785.7" cy="269.6" rx="3.4" ry="2.3" fill="#46525c" stroke="#111" stroke-width="0.7"/>
<path d="M781.2,267.0 Q785.7,265.0 790.2,267.4" stroke="#111" stroke-width="1.1" fill="none"/>
<path d="M774.9,274.0 L773.8,280.9 L774.9,281.4" stroke="#3a3a3a" stroke-width="0.7" fill="none"/>
<path d="M765.1,286.3 Q772.0,285.3 779.8,287.3 Q773.0,292.6 765.1,286.3Z" fill="#d2ab95" stroke="#5a4036" stroke-width="0.6"/>
<path d="M749.5,430.0 Q758.3,426.2 759.1,419.4 L758.8,406.6 L786.7,406.6 L787.2,420.4 Q790.6,426.2 814.2,430.0Z" fill="#f8f0bb" stroke="#2a2a2a" stroke-width="0.8"/>
<path d="M756.3,377.2C750.1,383.4 755.5,381.1 756.3,389.0C757.1,396.8 756.5,393.9 758.8,400.7C761.1,407.6 759.7,404.7 763.2,409.6C766.6,414.5 765.1,412.2 769.1,415.5C773.0,418.7 771.0,419.4 774.9,419.4C778.9,419.4 776.9,419.0 780.8,415.5C784.7,411.9 783.4,413.5 786.7,408.6C790.0,403.7 788.7,407.3 790.6,400.7C792.6,394.2 791.9,396.8 792.6,389.0C793.2,381.1 798.5,383.4 792.6,377.2C786.7,371.0 787.0,370.4 774.9,370.4C762.8,370.4 762.5,371.0 756.3,377.2Z" fill="#f8f0bb" stroke="#2a2a2a" stroke-width="0.8"/>
<path d="M774.9,345.8 L766.1,347.0 L757.3,351.7 L749.5,359.6 L743.6,369.4 L740.1,379.2 L737.7,385.1 L730.8,393.9 L739.5,389.5 L740.1,396.8 L742.1,403.2 L743.1,399.3 L746.5,406.1 L747.7,402.7 L751.4,409.1 L752.6,405.6 L756.5,411.7 L758.5,406.6 L757.5,400.7 L756.3,392.9 L756.3,380.2 L759.3,381.1 L762.2,362.0 L765.6,377.2 L773.0,387.0 L779.8,391.4 L778.1,377.2 L776.9,367.4 L783.3,375.7 L790.6,385.1 L792.1,389.0 L792.8,382.1 L793.4,389.0 L792.6,396.8 L790.6,405.6 L794.7,402.7 L797.5,404.9 L798.0,408.8 L799.6,406.6 L802.6,400.7 L804.5,392.9 L805.5,396.0 L807.5,390.9 L809.3,382.1 L808.3,374.5 L811.7,372.3 L808.3,370.4 L802.4,363.5 L794.5,354.7 L784.7,347.8Z" fill="#b6c8eb" stroke="#1a2026" stroke-width="0.8" stroke-linejoin="round"/>
<path d="M769.1,367.4 L773.0,377.2 L776.9,385.1 M770.0,373.3 L774.9,384.1 M783.8,374.3 L786.7,380.2 L790.6,384.1 M792.6,357.6 L798.5,364.5 L801.4,368.4 M753.4,364.5 L748.0,375.3 L748.5,387.0 M743.1,387.0 L746.5,394.9 L751.4,400.7 M796.5,368.4 L799.0,375.3 L799.5,379.2 M769.1,348.8 L776.9,348.3 L779.8,350.7 M792.6,368.4 L794.1,376.2 L793.4,382.1 M801.4,374.3 L802.4,382.1 L800.4,390.9 M748.5,389.0 L750.4,396.8 L755.3,404.7 M797.5,385.1 L796.5,392.9 L793.6,400.7 M762.2,362.0 L759.3,370.4 L757.8,377.2" stroke="#1a2026" stroke-width="0.7" fill="none" stroke-linejoin="round"/>
<ellipse cx="764.2" cy="385.1" rx="3.6" ry="2.2" fill="#e9e4ef" stroke="#111" stroke-width="0.6"/><circle cx="764.2" cy="385.1" r="1.5" fill="#22232b"/>
<path d="M759.2,382.5 L769.2,382.7" stroke="#111" stroke-width="1.1"/>
<ellipse cx="787.7" cy="385.1" rx="3.6" ry="2.2" fill="#e9e4ef" stroke="#111" stroke-width="0.6"/><circle cx="787.7" cy="385.1" r="1.5" fill="#22232b"/>
<path d="M782.7,382.5 L792.7,382.7" stroke="#111" stroke-width="1.1"/>
<path d="M774.5,391.9 L775.4,399.8 M766.1,407.2 L782.8,407.2 M772.0,421.3 L776.9,421.3" stroke="#3a3530" stroke-width="0.8" fill="none"/>
<path d="M735.7,542.0 Q750.4,533.3 754.4,524.5 L754.8,508.8 L784.7,518.6 L784.3,531.4 Q788.7,538.2 800.4,542.0Z" fill="#f0d18f" stroke="#1a1a1a" stroke-width="0.8"/>
<path d="M764.2,478.4C757.6,484.0 764.2,483.0 763.2,491.2C762.2,499.3 762.0,495.8 761.2,502.9C760.4,510.1 759.4,506.9 760.7,512.7C762.0,518.6 759.7,516.5 765.1,520.6C770.5,524.7 768.7,522.7 776.9,525.0C785.1,527.3 783.8,527.9 789.6,527.5C795.5,527.0 791.9,527.1 794.5,523.5C797.2,519.9 795.7,522.2 797.5,516.7C799.3,511.1 799.3,512.1 799.9,506.9C800.6,501.6 798.8,505.6 799.5,501.0C800.1,496.4 801.1,499.0 801.9,493.1C802.7,487.3 802.4,488.2 801.9,483.3C801.4,478.4 806.8,481.4 800.4,478.4C794.1,475.5 794.9,474.5 782.8,474.5C770.7,474.5 770.7,472.9 764.2,478.4Z" fill="#f0d18f" stroke="#1a1a1a" stroke-width="0.8"/>
<path d="M751.4,493.1C749.5,495.4 750.1,494.8 750.4,499.0C750.8,503.3 750.4,502.6 752.4,505.9C754.4,509.2 753.9,508.5 756.3,508.8C758.8,509.2 758.8,510.8 759.7,506.9C760.7,502.9 760.4,502.0 759.3,497.1C758.1,492.2 758.9,493.5 756.3,492.2C753.7,490.8 753.4,490.8 751.4,493.1Z" fill="#f0d18f" stroke="#1a1a1a" stroke-width="0.8"/>
<path d="M782.8,454.9 L784.7,457.8 L788.7,455.4 L788.7,458.8 L796.5,458.3 L794.5,460.8 L802.9,461.8 L799.5,464.2 L806.3,470.1 L802.4,470.6 L805.3,474.5 L801.4,474.5 L802.4,479.4 L798.5,477.5 L795.5,479.4 L792.6,477.5 L788.7,478.9 L780.8,477.5 L773.0,477.0 L765.1,478.4 L769.1,481.4 L766.1,484.3 L769.1,487.3 L765.1,491.2 L764.2,497.1 L763.7,503.4 L761.2,499.0 L760.2,494.1 L755.3,492.2 L750.4,494.1 L747.7,487.3 L747.5,479.4 L751.4,469.6 L759.3,462.7 L769.1,458.8 L776.9,457.8Z" fill="#1b1b1d" stroke="#111" stroke-width="0.6" stroke-linejoin="round"/>
<ellipse cx="781.8" cy="494.3" rx="4.6" ry="2.9" fill="#ffffff" stroke="#1a1a1a" stroke-width="0.7"/><circle cx="784.7" cy="494.3" r="2" fill="#3a2a22"/>
<ellipse cx="799.0" cy="494.6" rx="1.8" ry="2.4" fill="#ffffff" stroke="#1a1a1a" stroke-width="0.6"/>
<path d="M774.0,489.2 Q780.8,485.8 787.2,489.2 M797.0,490.2 L801.9,489.2" stroke="#111" stroke-width="1.4" fill="none"/>
<path d="M798.0,497.1 Q800.4,502.9 798.5,506.9 Q795.5,508.8 792.6,506.9 M759.7,522.5 Q765.1,531.4 774.0,537.3" stroke="#1a1a1a" stroke-width="0.8" fill="none"/>
<path d="M777.4,512.3 Q785.7,516.2 796.0,516.7 Q786.7,520.6 777.4,512.3Z" fill="#ffffff" stroke="#1a1a1a" stroke-width="0.8"/>
</svg><!--/PORT-->
<!--IC3--><svg class="abs" style="left:0;top:0;pointer-events:none" width="1920" height="969" viewBox="0 0 1920 969">
<g transform="translate(850.3,240)">
<path d="M16.800,6.200 C14.500,1.200 9,0.300 5,2.600 C0.500,5.200 -0.200,11 2.600,15.600 C5.500,20.600 11,25.500 15.600,29.400 L17.400,26.200 L13.200,21.600 L17.800,17 L13.800,12 Z" fill="#c9e6f8" stroke="#15181d" stroke-width="1.300" stroke-linejoin="round"/>
<path d="M19.400,5.400 C22,1 27.800,0.200 32,2.600 C36.600,5.200 37.600,11 34.800,15.600 C31.800,20.600 25.500,25.800 20,30 L20.800,26.800 L16.600,22 L21.200,17.600 L17.200,12.400 Z" fill="#c9e6f8" stroke="#15181d" stroke-width="1.300" stroke-linejoin="round"/>
</g>
<g transform="translate(953.7,235.4)"><rect x="0.7" y="0.7" width="25.6" height="35.600" fill="#ffffff" stroke="#b9505a" stroke-width="1.200"/><path d="M4,5.3 L8.400,9.7 M8.400,5.3 L4,9.7" stroke="#b9505a" stroke-width="1.100" fill="none"/><path d="M12,7.5 H23" stroke="#b9505a" stroke-width="1.100" opacity="0.800"/><path d="M4,15.8 L8.400,20.2 M8.400,15.8 L4,20.2" stroke="#b9505a" stroke-width="1.100" fill="none"/><path d="M12,18 H23" stroke="#b9505a" stroke-width="1.100" opacity="0.800"/><path d="M3.800,29 L5.600,30.8 L8.800,27.2" stroke="#b9505a" stroke-width="1.100" fill="none"/><path d="M12,29 H23" stroke="#b9505a" stroke-width="1.100" opacity="0.800"/></g>
<path d="M1046.8,255.7 L1053.3,250.2 L1059.3,258.2 L1079.8,244.7 L1082.8,251.2 L1058.8,269.7 Z" fill="#3fb22e"/>
<path d="M1144.3,255.7 L1150.8,250.2 L1156.8,258.2 L1177.3,244.7 L1180.3,251.2 L1156.3,269.7 Z" fill="#3fb22e"/>
<path d="M1241.8,255.7 L1248.3,250.2 L1254.3,258.2 L1274.8,244.7 L1277.8,251.2 L1253.8,269.7 Z" fill="#3fb22e"/>
<path d="M1339.3,255.7 L1345.8,250.2 L1351.8,258.2 L1372.3,244.7 L1375.3,251.2 L1351.3,269.7 Z" fill="#3fb22e"/>
<g transform="translate(850.5999999999999,352)">
<path d="M16.800,6.200 C14.500,1.200 9,0.300 5,2.600 C0.500,5.200 -0.200,11 2.600,15.600 C5.500,20.600 11,25.500 15.600,29.400 L17.400,26.200 L13.200,21.600 L17.800,17 L13.800,12 Z" fill="#b3c7ea" stroke="#15181d" stroke-width="1.300" stroke-linejoin="round"/>
<path d="M19.400,5.400 C22,1 27.800,0.200 32,2.600 C36.600,5.200 37.600,11 34.800,15.600 C31.800,20.600 25.500,25.800 20,30 L20.800,26.800 L16.600,22 L21.200,17.600 L17.200,12.400 Z" fill="#b3c7ea" stroke="#15181d" stroke-width="1.300" stroke-linejoin="round"/>
</g>
<g transform="translate(953.2,347.8)"><rect x="0.7" y="0.7" width="25.6" height="35.600" fill="#ffffff" stroke="#b9505a" stroke-width="1.200"/><path d="M4,5.3 L8.400,9.7 M8.400,5.3 L4,9.7" stroke="#b9505a" stroke-width="1.100" fill="none"/><path d="M12,7.5 H23" stroke="#b9505a" stroke-width="1.100" opacity="0.800"/><path d="M4,15.8 L8.400,20.2 M8.400,15.8 L4,20.2" stroke="#b9505a" stroke-width="1.100" fill="none"/><path d="M12,18 H23" stroke="#b9505a" stroke-width="1.100" opacity="0.800"/><path d="M3.800,29 L5.600,30.8 L8.800,27.2" stroke="#b9505a" stroke-width="1.100" fill="none"/><path d="M12,29 H23" stroke="#b9505a" stroke-width="1.100" opacity="0.800"/></g>
<path d="M1046.8,368.2 L1053.3,362.7 L1059.3,370.7 L1079.8,357.2 L1082.8,363.7 L1058.8,382.2 Z" fill="#3fb22e"/>
<path d="M1144.3,368.2 L1150.8,362.7 L1156.8,370.7 L1177.3,357.2 L1180.3,363.7 L1156.3,382.2 Z" fill="#3fb22e"/>
<path d="M1241.8,368.2 L1248.3,362.7 L1254.3,370.7 L1274.8,357.2 L1277.8,363.7 L1253.8,382.2 Z" fill="#3fb22e"/>
<path d="M1339.3,368.2 L1345.8,362.7 L1351.8,370.7 L1372.3,357.2 L1375.3,363.7 L1351.3,382.2 Z" fill="#3fb22e"/>
<path d="M869.500,494.300 C858,485.500 853.600,480 853.600,474 C853.600,468 857.800,464.400 862,464.400 C865.200,464.400 868,466.200 869.500,469.400 C871,466.200 873.800,464.400 877,464.400 C881.200,464.400 885.400,468 885.400,474 C885.400,480 881,485.500 869.500,494.300Z" fill="#3b3b3d" stroke="#1e1e20" stroke-width="1.300"/>
<g transform="translate(953.2,460.2)"><rect x="0.7" y="0.7" width="25.6" height="35.600" fill="#ffffff" stroke="#3d8a48" stroke-width="1.200"/><path d="M3.800,7.5 L5.600,9.3 L8.800,5.7" stroke="#3d8a48" stroke-width="1.100" fill="none"/><path d="M12,7.5 H23" stroke="#3d8a48" stroke-width="1.100" opacity="0.800"/><path d="M3.800,18 L5.600,19.8 L8.800,16.2" stroke="#3d8a48" stroke-width="1.100" fill="none"/><path d="M12,18 H23" stroke="#3d8a48" stroke-width="1.100" opacity="0.800"/><path d="M3.800,29 L5.600,30.8 L8.800,27.2" stroke="#3d8a48" stroke-width="1.100" fill="none"/><path d="M12,29 H23" stroke="#3d8a48" stroke-width="1.100" opacity="0.800"/></g>
<path d="M1052,463 H1076.500 A3.500,3.500 0 0 1 1080,466.500 V483 A3.500,3.500 0 0 1 1076.500,486.500 H1060.500 L1052.500,494 L1054,486.500 H1052 A3.500,3.500 0 0 1 1048.500,483 V466.500 A3.500,3.500 0 0 1 1052,463Z" fill="#ffffff" stroke="#3d9a4c" stroke-width="1.400" stroke-linejoin="round"/>
<path d="M1053,469 H1072 M1055,473.500 H1062 M1064,473.500 H1074 M1053,478 H1068 M1055,482 H1067 M1069,482 H1075" stroke="#3d9a4c" stroke-width="1.100" fill="none"/>
<circle cx="1064" cy="524" r="3.300" fill="#f6f06c" stroke="#24241a" stroke-width="0.800"/>
<circle cx="1161.8" cy="478.4" r="16.800" fill="#ffffff"/><path d="M1161.8,465.4 V478.9 L1169.8,485.4" fill="none" stroke="#66666a" stroke-width="1.500"/>
<circle cx="1259.3" cy="478.4" r="16.800" fill="#ffffff"/><path d="M1259.3,465.4 V478.9 L1267.3,485.4" fill="none" stroke="#66666a" stroke-width="1.500"/>
<circle cx="1356.8" cy="478.4" r="16.800" fill="#ffffff"/><path d="M1356.8,465.4 V478.9 L1364.8,485.4" fill="none" stroke="#66666a" stroke-width="1.500"/>
</svg><!--/IC3-->
</body>
</html>
